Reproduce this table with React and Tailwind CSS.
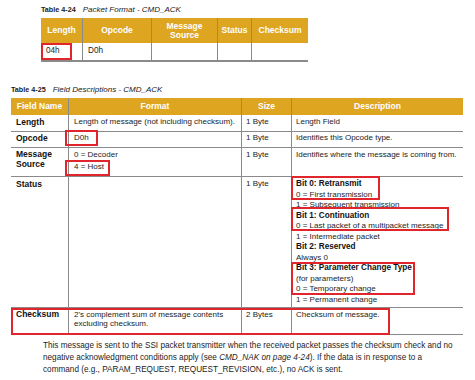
import React from 'react';

const gold = 'bg-[#dea521]';
const line = 'border-[#8a8a8a]';
const redBox = 'absolute border-2 border-[#e1252c] pointer-events-none';

const Caption = ({ num, title, className }) => (
  <div className={`flex items-baseline gap-[7px] leading-[11px] ${className}`}>
    <span className="text-[7.2px] font-bold text-[#1a1a1a]">Table {num}</span>
    <span className="text-[8px] italic text-[#1a1a1a]">{title}</span>
  </div>
);

const PacketTable = () => {
  const heads = ['Length', 'Opcode', 'Message Source', 'Status', 'Checksum'];
  const vals = ['04h', 'D0h', '', '', ''];
  return (
    <div className="ml-[41px] w-[267px]">
      <div className={`grid grid-cols-[41px_69px_66px_34px_57px] h-[25px] ${gold}`}>
        {heads.map((h, i) => (
          <div
            key={h}
            className={`flex items-center justify-center text-center px-[2px] text-[8.5px] font-bold text-white leading-[8.5px] ${i > 0 ? `border-l ${line}` : ''}`}
          >
            {h === 'Message Source' ? (
              <span>
                Message
                <br />
                Source
              </span>
            ) : (
              h
            )}
          </div>
        ))}
      </div>
      <div className={`grid grid-cols-[41px_69px_66px_34px_57px] h-[19px] border-b-2 ${line}`}>
        {vals.map((v, i) => (
          <div
            key={i}
            className={`relative pl-[5px] pt-[3px] text-[8.2px] leading-[10.5px] text-[#1c1c1c] ${i > 0 ? `border-l ${line}` : ''}`}
          >
            {v}
            {i === 0 && <span className={`${redBox} left-0 top-0 w-[31px] h-[17px]`} />}
          </div>
        ))}
      </div>
    </div>
  );
};

const Row = ({ h, name, format, size, desc, nameCls = 'leading-[10.5px]', pt = 'pt-[2px]', children }) => (
  <div className={`relative grid grid-cols-[57px_173px_50px_172px] border-b ${line} ${h}`}>
    <div className={`relative pl-[5px] ${pt} text-[8.5px] font-bold text-[#111] ${nameCls}`}>{name}</div>
    <div className={`relative border-l ${line} pl-[5px] ${pt} text-[8px] leading-[10.5px] text-[#1c1c1c]`}>{format}</div>
    <div className={`relative border-l ${line} pl-[4px] ${pt} text-[8px] leading-[10.5px] text-[#1c1c1c]`}>{size}</div>
    <div className={`relative border-l ${line} pl-[4px] ${pt} text-[8px] leading-[10.5px] text-[#1c1c1c]`}>{desc}</div>
    {children}
  </div>
);

const B = ({ children }) => <div className="font-bold text-[8.2px] text-[#111]">{children}</div>;

const FieldTable = () => (
  <div className="ml-[11px] w-[452px]">
    <div className={`grid grid-cols-[57px_173px_50px_172px] h-[17px] ${gold}`}>
      {['Field Name', 'Format', 'Size', 'Description'].map((h, i) => (
        <div
          key={h}
          className={`flex items-center justify-center text-[8.5px] font-bold text-white ${i > 0 ? `border-l ${line}` : ''}`}
        >
          {h}
        </div>
      ))}
    </div>
    <Row h="h-[17px]" name="Length" format="Length of message (not including checksum)." size="1 Byte" desc="Length Field" />
    <Row
      h="h-[16px]"
      pt="pt-[1px]"
      name="Opcode"
      format={
        <>
          D0h
          <span className={`${redBox} left-[-4px] top-[-2px] w-[33px] h-[16px]`} />
        </>
      }
      size="1 Byte"
      desc="Identifies this Opcode type."
    />
    <Row
      h="h-[29px]"
      nameCls="leading-[9.5px]"
      name={
        <>
          Message
          <br />
          Source
        </>
      }
      format={
        <>
          <div>0 = Decoder</div>
          <div className="mt-[1.5px]">4 = Host</div>
          <span className={`${redBox} left-[-4px] top-[12px] w-[45px] h-[16px]`} />
        </>
      }
      size="1 Byte"
      desc="Identifies where the message is coming from."
    />
    <Row
      h="h-[131px]"
      name="Status"
      format=""
      size="1 Byte"
      desc={
        <>
          <B>Bit 0: Retransmit</B>
          <div>0 = First transmission</div>
          <div>1 = Subsequent transmission</div>
          <B>Bit 1: Continuation</B>
          <div>0 = Last packet of a multipacket message</div>
          <div>1 = Intermediate packet</div>
          <B>Bit 2: Reserved</B>
          <div>Always 0</div>
          <B>Bit 3: Parameter Change Type</B>
          <div>(for parameters)</div>
          <div>0 = Temporary change</div>
          <div>1 = Permanent change</div>
          <span className={`${redBox} left-[-1px] top-[-1px] w-[89px] h-[24px]`} />
          <span className={`${redBox} left-[-1px] top-[30px] w-[158px] h-[24px]`} />
          <span className={`${redBox} left-[-1px] top-[85px] w-[124px] h-[33px]`} />
        </>
      }
    />
    <Row
      h="h-[27px]"
      nameCls="leading-[9px]"
      name="Checksum"
      format={
        <div className="leading-[9px]">
          2's complement sum of message contents
          <br />
          excluding checksum.
        </div>
      }
      size={<div className="leading-[9px]">2 Bytes</div>}
      desc={<div className="leading-[9px]">Checksum of message.</div>}
    >
      <span className={`${redBox} left-0 top-0 w-[379px] h-[27px]`} />
    </Row>
  </div>
);

export default function App() {
  return (
    <div className="w-[475px] h-[380px] bg-white overflow-hidden font-['Liberation_Sans',Arial,sans-serif]">
      <Caption num="4-24" title="Packet Format - CMD_ACK" className="ml-[41px] pt-[4px]" />
      <div className="mt-[3px]">
        <PacketTable />
      </div>
      <Caption num="4-25" title="Field Descriptions - CMD_ACK" className="ml-[11px] mt-[22px]" />
      <div className="mt-[3px]">
        <FieldTable />
      </div>
      <p className="ml-[43px] mt-[5px] text-[8.2px] leading-[12px] text-[#1c1c1c]">
        This message is sent to the SSI packet transmitter when the received packet passes the checksum check and no
        <br />
        negative acknowledgment conditions apply (see <i>CMD_NAK on page 4-24</i>). If the data is in response to a
        <br />
        command (e.g., PARAM_REQUEST, REQUEST_REVISION, etc.), no ACK is sent.
      </p>
    </div>
  );
}
